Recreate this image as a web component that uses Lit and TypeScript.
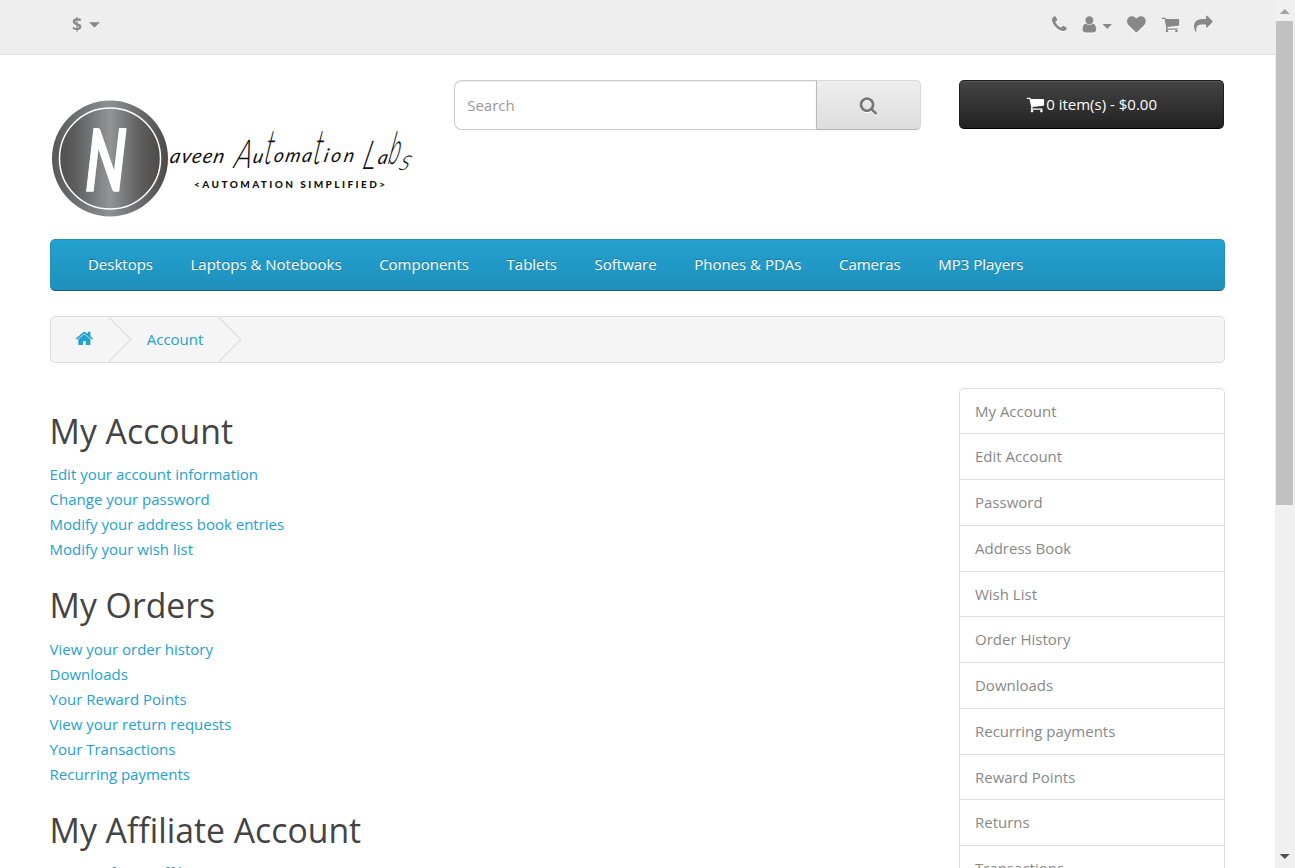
import { LitElement, html, css, svg } from "lit";
import { customElement, property } from "lit/decorators.js";

const ICONS: Record<string, string> = {
  phone: "M1600 1240q0 27-10 70.5t-21 68.5q-21 50-122 106-94 51-186 51-27 0-53-3.5t-57.5-12.5-47-14.5-55.5-20.5-49-18q-98-35-175-83-127-79-264-216t-216-264q-48-77-83-175-3-9-18-49t-20.5-55.5-14.5-47-12.5-57.5-3.5-53q0-92 51-186 56-101 106-122 25-11 68.5-21t70.5-10q14 0 21 3 18 6 53 76 11 19 30 54t35 63.5 31 53.5q3 4 17.5 25t21.5 35.5 7 28.5q0 20-28.5 50t-62 55-62 53-28.5 46q0 9 5 22.5t8.5 20.5 14 24 11.5 19q76 137 174 235t235 174q2 1 19 11.5t24 14 20.5 8.5 22.5 5q18 0 46-28.5t53-62 55-62 50-28.5q14 0 28.5 7t35.5 21.5 25 17.5q25 15 53.5 31t63.5 35 54 30q70 35 76 53 3 7 3 21z",
  user: "M1536 1399q0 109-62.5 187t-150.5 78h-854q-88 0-150.5-78t-62.5-187q0-85 8.5-160.5t31.5-152 58.5-131 94-89 134.5-34.5q131 128 313 128t313-128q76 0 134.5 34.5t94 89 58.5 131 31.5 152 8.5 160.5zm-256-887q0 159-112.5 271.5t-271.5 112.5-271.5-112.5-112.5-271.5 112.5-271.5 271.5-112.5 271.5 112.5 112.5 271.5z",
  heart: "M896 1664q-26 0-44-18l-624-602q-10-8-27.5-26t-55.5-65.5-68-97.5-53.5-121-23.5-138q0-220 127-344t351-124q62 0 126.5 21.5t120 58 95.5 68.5 76 68q36-36 76-68t95.5-68.5 120-58 126.5-21.5q224 0 351 124t127 344q0 221-229 450l-623 600q-18 18-44 18z",
  cart: "M704 1536q0 52-38 90t-90 38-90-38-38-90 38-90 90-38 90 38 38 90zm896 0q0 52-38 90t-90 38-90-38-38-90 38-90 90-38 90 38 38 90zm128-1088v512q0 24-16.5 42.5t-40.5 21.5l-1044 122q13 60 13 70 0 16-24 64h920q26 0 45 19t19 45-19 45-45 19h-1024q-26 0-45-19t-19-45q0-11 8-31.5t16-36 21.5-40 15.5-29.5l-177-823h-204q-26 0-45-19t-19-45 19-45 45-19h256q16 0 28.5 6.5t19.5 15.5 13 24.5 8 26 5.5 29.5 4.5 26h1201q26 0 45 19t19 45z",
  share: "M1792 640q0 26-19 45l-512 512q-19 19-45 19t-45-19-19-45v-256h-224q-98 0-175.5 6t-154 21.5-133 42.5-105.5 69.5-80 101-48.5 138.5-17.5 181q0 55 5 123 0 6 2.5 23.5t2.5 26.5q0 15-8.5 25t-23.5 10q-16 0-28-17-7-9-13-22t-13.5-30-10.5-24q-127-285-127-451 0-199 53-333 162-403 875-403h224v-256q0-26 19-45t45-19 45 19l512 512q19 19 19 45z",
  search: "M1216 832q0-185-131.5-316.5t-316.5-131.5-316.5 131.5-131.5 316.5 131.5 316.5 316.5 131.5 316.5-131.5 131.5-316.5zm512 832q0 52-38 90t-90 38q-54 0-90-38l-343-342q-179 124-399 124-143 0-273.5-55.5t-225-150-150-225-55.5-273.5 55.5-273.5 150-225 225-150 273.5-55.5 273.5 55.5 225 150 150 225 55.5 273.5q0 220-124 399l343 343q37 37 37 90z",
  home: "M1472 992v480q0 26-19 45t-45 19h-384v-384h-256v384h-384q-26 0-45-19t-19-45v-480q0-1 .5-3t.5-3l575-474 575 474q1 2 1 6zm223-69l-62 74q-8 9-21 11h-3q-13 0-21-7l-692-577-692 577q-12 8-24 7-13-2-21-11l-62-74q-8-10-7-23.5t11-21.5l719-599q32-26 76-26t76 26l244 204v-195q0-14 9-23t23-9h192q14 0 23 9t9 23v408l219 182q10 8 11 21.5t-7 23.5z",
};

@customElement("shop-icon")
export class ShopIcon extends LitElement {
  @property() name = "";
  static styles = css`
    :host { display: block; width: 18.75px; height: 18.75px; flex: none; }
    svg { display: block; width: 100%; height: 100%; fill: currentColor; overflow: visible; }
  `;
  render() {
    return html`<svg viewBox="0 0 1792 1792"><path d=${ICONS[this.name] ?? ""}></path></svg>`;
  }
}

@customElement("shop-logo")
export class ShopLogo extends LitElement {
  static styles = css`
    :host { display: block; width: 368px; height: 124px; }
    svg { display: block; overflow: visible; }
    .script { font-family: Lato, sans-serif; font-style: italic; font-weight: 400; fill: #111; }
    .tall { font-weight: 300; }
    .tag { font-family: Lato, sans-serif; font-weight: 900; font-size: 10px; fill: #111; }
    .initial { font-family: Lato, sans-serif; font-style: italic; font-weight: 700; font-size: 86px; fill: #fff; stroke: #fff; stroke-width: 1.5; stroke-linejoin: round; }
  `;
  render() {
    return html`<svg width="368" height="124" viewBox="48 97 368 124">
      <defs>
        <linearGradient id="metal" x1="0" x2="1" y1="0" y2="0">
          <stop offset="0" stop-color="#505050"></stop>
          <stop offset="0.15" stop-color="#5c5c5c"></stop>
          <stop offset="0.5" stop-color="#929497"></stop>
          <stop offset="0.8" stop-color="#5e5e5e"></stop>
          <stop offset="1" stop-color="#4c4a49"></stop>
        </linearGradient>
        <linearGradient id="rim" x1="0" x2="1" y1="0" y2="0">
          <stop offset="0" stop-color="#585858"></stop>
          <stop offset="0.5" stop-color="#8d8f92"></stop>
          <stop offset="1" stop-color="#4c4a49"></stop>
        </linearGradient>
      </defs>
      <circle cx="110" cy="158.5" r="58" fill="url(#rim)"></circle>
      <circle cx="110" cy="158.5" r="50.5" fill="url(#metal)" stroke="#fff" stroke-width="1.5"></circle>
      ${svg`
      <text class="initial" transform="translate(84.5 191) skewX(-2) scale(.66 1)" x="0" y="0">N</text>
      <text class="script" font-size="20" transform="translate(169 163) skewX(-12)" textLength="54">aveen</text>
      <text class="script tall" font-size="40" transform="translate(233 168) skewX(-12) scale(.72 1)">A</text>
      <text class="script" font-size="19" transform="translate(252 163) skewX(-12)">u</text>
      <text class="script tall" font-size="49" transform="translate(263 164) skewX(-10) scale(.52 1)">t</text>
      <text class="script" font-size="19" transform="translate(273 162) skewX(-12)" textLength="38">oma</text>
      <text class="script tall" font-size="49" transform="translate(312 164) skewX(-10) scale(.52 1)">t</text>
      <text class="script" font-size="19" transform="translate(323 162) skewX(-12)" textLength="30">ion</text>
      <text class="script tall" font-size="40" transform="translate(361 169) skewX(-14) scale(.72 1)">L</text>
      <text class="script" font-size="19" transform="translate(377 164) skewX(-12)">a</text>
      <text class="script tall" font-size="45" transform="translate(387 164) skewX(-12) scale(.48 1)">b</text>
      <text class="script tall" font-size="29" transform="translate(398 170) skewX(-20) scale(.9 1)">s</text>
      <text class="tag" x="194" y="187.5" textLength="191">&lt;AUTOMATION SIMPLIFIED&gt;</text>`}
    </svg>`;
  }
}

@customElement("app-root")
export class AppRoot extends LitElement {
  menu = ["Desktops", "Laptops & Notebooks", "Components", "Tablets", "Software", "Phones & PDAs", "Cameras", "MP3 Players"];
  sections = [
    { title: "My Account", links: ["Edit your account information", "Change your password", "Modify your address book entries", "Modify your wish list"] },
    { title: "My Orders", links: ["View your order history", "Downloads", "Your Reward Points", "View your return requests", "Your Transactions", "Recurring payments"] },
    { title: "My Affiliate Account", links: ["Register for an affiliate account"] },
  ];
  side = ["My Account", "Edit Account", "Password", "Address Book", "Wish List", "Order History", "Downloads", "Recurring payments", "Reward Points", "Returns", "Transactions"];

  static styles = css`
    :host { display: flex; width: 1295px; height: 868px; overflow: hidden; background: #fff; font: 400 15px/25px "Open Sans", sans-serif; color: #666; }
    * { box-sizing: border-box; }
    .page { width: 1274.5px; height: 868px; overflow: hidden; flex: none; }
    .top { height: 55px; background: #eee; border-bottom: 1px solid #e2e2e2; display: flex; justify-content: space-between; padding: 15.2px 61.3px 0 72px; color: #888; }
    .top shop-icon, .currency, .caret { filter: drop-shadow(0 1px 0 #fff); }
    .currency { display: flex; gap: 7px; font-size: 17.5px; font-weight: 700; line-height: 19px; }
    .caret { width: 11px; height: 5.5px; background: #888; clip-path: polygon(0 0, 100% 0, 50% 100%); margin-top: 7px; }
    .caret.small { width: 9.5px; height: 4.8px; margin: 8.8px 0 0 3.7px; }
    .tools { display: flex; }
    .user { display: flex; margin: 0 15.4px 0 11.2px; }
    .heart { margin-right: 15px; }
    .tools .cart { margin-right: 14.6px; }
    .wrap { width: 1175px; margin-left: 49.6px; }
    .header { display: flex; height: 184px; padding-top: 25px; }
    .logo { width: 404.2px; margin-left: -1.6px; padding-top: 17px; flex: none; }
    .search { display: flex; width: 469.2px; height: 50px; flex: none; }
    .field { width: 362px; flex: none; border: 1px solid #ccc; border-right: 0; border-radius: 7.5px 0 0 7.5px; padding: 12px; line-height: 25px; color: #999; box-shadow: inset 0 1px 1px rgba(0,0,0,.075); margin-left: 2px; }
    .go { flex: 1; border: 1px solid #ddd; border-color: #d9d9d9 #d9d9d9 #b3b3b3 #b8b8b8; border-radius: 0 5px 5px 0; background: linear-gradient(#eee, #ddd); display: flex; align-items: center; justify-content: center; color: #777; box-shadow: 0 1px 2px rgba(0,0,0,.05); }
    .go shop-icon { filter: drop-shadow(0 1px 0 #fff); }
    .basket { width: 265px; flex: none; height: 49px; margin-left: 37.6px; border-radius: 5px; border: 1px solid #1f1f1f; border-bottom-color: #000; background: linear-gradient(#444, #222); color: #fff; display: flex; align-items: center; justify-content: center; gap: 1.5px; box-shadow: inset 0 1px 0 rgba(255,255,255,.1); padding-bottom: 1px; }
    .menu { height: 52px; border: 1px solid #1f90bb; border-bottom-color: #145e7a; border-radius: 5px; background: linear-gradient(#23a1d1, #1f90bb); display: flex; gap: 37.5px; padding: 12px 37.4px; line-height: 24px; color: #fff; text-shadow: 0 -1px 0 rgba(0,0,0,.25); white-space: nowrap; }
    .crumbs { margin-top: 25px; height: 47px; border: 1px solid #ddd; border-radius: 5px; background: #f5f5f5; display: flex; align-items: center; color: #23a1d1; }
    .crumbs .home { margin: 0 13.6px 2px 24.8px; }
    .crumbs .here { margin: 0 15px; line-height: 45px; }
    .arrow { display: block; width: 24px; height: 45px; fill: none; stroke: #ddd; stroke-width: 1.1; }
    .body { display: flex; justify-content: space-between; padding-top: 24.6px; }
    .content { width: 870px; padding-top: 25.2px; }
    .content h2 { margin: 0; padding-bottom: 12.3px; font-size: 33.75px; line-height: 37.1px; font-weight: 400; color: #444; }
    .content ul { list-style: none; padding: 0; margin: 0 0 25.2px; color: #23a1d1; }
    .content ul:last-child { margin-top: -1px; }
    .side { width: 266px; height: 560px; border: 1px solid #ddd; border-radius: 5px 5px 0 0; margin-right: -.6px; color: #888; }
    .side div { height: 45.75px; padding: 10.1px 14.8px 0; }
    .side div + div { border-top: 1px solid #ddd; }
    .side div:first-child { height: 44.75px; padding-top: 10.4px; }
    .scroll { flex: 1; height: 868px; background: #f0f0f0; display: flex; flex-direction: column; align-items: center; padding: 9px 0 9px; }
    .up, .down { width: 10px; height: 5px; flex: none; background: #a3a3a3; clip-path: polygon(50% 0, 100% 100%, 0 100%); }
    .down { background: #505050; clip-path: polygon(0 0, 100% 0, 50% 100%); margin-top: auto; }
    .thumb { width: 17px; height: 484px; margin-top: 7px; background: #c1c1c1; }
  `;

  arrow() {
    return html`<svg class="arrow" viewBox="0 0 24 45"><path d="M.5 0L23 22.5L.5 45"></path></svg>`;
  }

  render() {
    return html`
      <div class="page">
        <div class="top">
          <div class="currency"><span>$</span><i class="caret"></i></div>
          <div class="tools">
            <shop-icon name="phone"></shop-icon>
            <div class="user"><shop-icon name="user"></shop-icon><i class="caret small"></i></div>
            <shop-icon class="heart" name="heart"></shop-icon>
            <shop-icon class="cart" name="cart"></shop-icon>
            <shop-icon name="share"></shop-icon>
          </div>
        </div>
        <div class="wrap">
          <div class="header">
            <div class="logo"><shop-logo></shop-logo></div>
            <div class="search">
              <div class="field">Search</div>
              <div class="go"><shop-icon name="search"></shop-icon></div>
            </div>
            <div class="basket"><shop-icon name="cart"></shop-icon><span>0 item(s) - $0.00</span></div>
          </div>
          <nav class="menu">${this.menu.map((m) => html`<span>${m}</span>`)}</nav>
          <div class="crumbs">
            <shop-icon class="home" name="home"></shop-icon>${this.arrow()}
            <span class="here">Account</span>${this.arrow()}
          </div>
          <div class="body">
            <div class="content">
              ${this.sections.map((s) => html`<h2>${s.title}</h2><ul>${s.links.map((l) => html`<li>${l}</li>`)}</ul>`)}
            </div>
            <div class="side">${this.side.map((s) => html`<div>${s}</div>`)}</div>
          </div>
        </div>
      </div>
      <div class="scroll"><i class="up"></i><i class="thumb"></i><i class="down"></i></div>
    `;
  }
}
